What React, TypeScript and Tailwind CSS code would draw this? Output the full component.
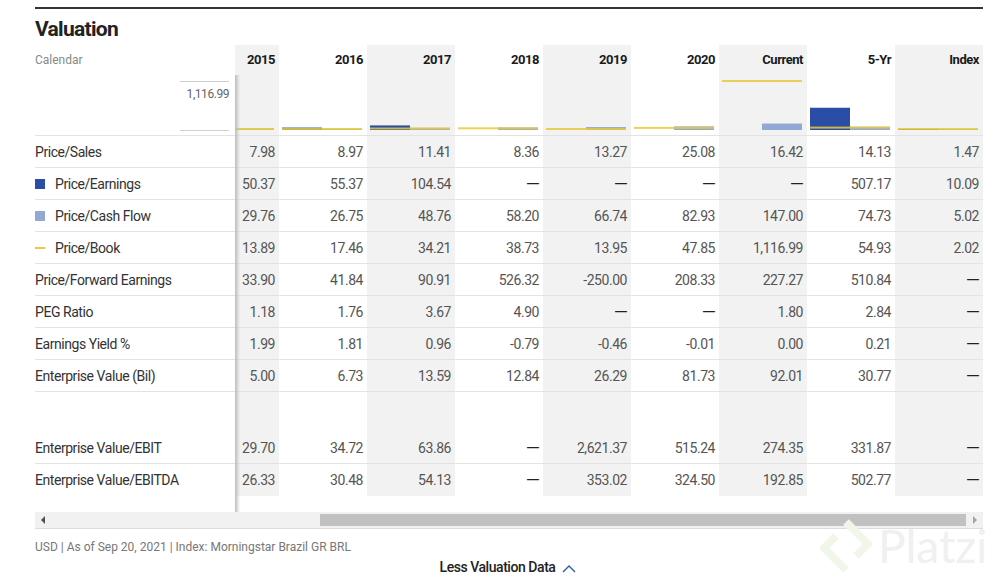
import React from 'react';

const cols = ['2015', '2016', '2017', '2018', '2019', '2020', 'Current', '5-Yr', 'Index'];

type Row = { label: string; marker?: 'pe' | 'cf' | 'pb'; values: string[] };

const rows: Row[] = [
  { label: 'Price/Sales', values: ['7.98', '8.97', '11.41', '8.36', '13.27', '25.08', '16.42', '14.13', '1.47'] },
  { label: 'Price/Earnings', marker: 'pe', values: ['50.37', '55.37', '104.54', '—', '—', '—', '—', '507.17', '10.09'] },
  { label: 'Price/Cash Flow', marker: 'cf', values: ['29.76', '26.75', '48.76', '58.20', '66.74', '82.93', '147.00', '74.73', '5.02'] },
  { label: 'Price/Book', marker: 'pb', values: ['13.89', '17.46', '34.21', '38.73', '13.95', '47.85', '1,116.99', '54.93', '2.02'] },
  { label: 'Price/Forward Earnings', values: ['33.90', '41.84', '90.91', '526.32', '-250.00', '208.33', '227.27', '510.84', '—'] },
  { label: 'PEG Ratio', values: ['1.18', '1.76', '3.67', '4.90', '—', '—', '1.80', '2.84', '—'] },
  { label: 'Earnings Yield %', values: ['1.99', '1.81', '0.96', '-0.79', '-0.46', '-0.01', '0.00', '0.21', '—'] },
  { label: 'Enterprise Value (Bil)', values: ['5.00', '6.73', '13.59', '12.84', '26.29', '81.73', '92.01', '30.77', '—'] },
];

const rowsBottom: Row[] = [
  { label: 'Enterprise Value/EBIT', values: ['29.70', '34.72', '63.86', '—', '2,621.37', '515.24', '274.35', '331.87', '—'] },
  { label: 'Enterprise Value/EBITDA', values: ['26.33', '30.48', '54.13', '—', '353.02', '324.50', '192.85', '502.77', '—'] },
];

const toNum = (s: string) => {
  const n = parseFloat(s.replace(/,/g, ''));
  return isNaN(n) ? null : n;
};

const MAX = 1116.99;
const SCALE = 49 / MAX;

const font = { fontFamily: 'Roboto, "Liberation Sans", sans-serif' };

const Marker = ({ type }: { type?: Row['marker'] }) => {
  if (type === 'pe') return <span className="inline-block w-[10px] h-[10px] bg-[#2a4ea6] mr-[10px]" />;
  if (type === 'cf') return <span className="inline-block w-[10px] h-[10px] bg-[#93a9d3] mr-[10px]" />;
  if (type === 'pb') return <span className="inline-block w-[10px] h-[2px] bg-[#e8c93a] mr-[10px]" />;
  return null;
};

const ChartCell = ({ i }: { i: number }) => {
  const pe = toNum(rows[1].values[i]);
  const cf = toNum(rows[2].values[i]);
  const pb = toNum(rows[3].values[i]);
  const h = (v: number | null) => (v === null ? 0 : Math.max(1, v * SCALE));
  const base = 55;
  return (
    <svg width="88" height="61" className="block">
      {pe !== null && <rect x="3" y={base - h(pe)} width="40" height={h(pe)} fill="#2a4ea6" />}
      {cf !== null && <rect x="43" y={base - h(cf)} width="40" height={h(cf)} fill="#93a9d3" />}
      {pb !== null && <rect x="3" y={Math.min(base - 2, base - h(pb) - 1)} width="80" height="2" fill="#e8c93a" opacity="0.85" />}
    </svg>
  );
};

const DataRow = ({ row, border = true }: { row: Row; border?: boolean }) => (
  <div className={`flex h-[32px] ${border ? 'border-b border-[#e3e3e3]' : ''}`}>
    <div className="w-[200px] shrink-0 flex items-center pt-[1px] text-[14px] text-[#333]">
      <Marker type={row.marker} />
      {row.label}
    </div>
    <div className="w-[748px] overflow-hidden">
      <div className="flex ml-[-44px] h-full">
        {row.values.map((v, i) => (
          <div
            key={i}
            className={`w-[88px] shrink-0 flex items-center justify-end pt-[1px] pr-[4px] text-[14px] ${i % 2 === 0 ? 'bg-[#f2f2f2]' : ''}`}
          >
            {v === '—' ? (
              <span className="inline-block text-[#222] scale-x-[1.3] origin-right">—</span>
            ) : (
              <span className="text-[#555]">{v}</span>
            )}
          </div>
        ))}
      </div>
    </div>
  </div>
);

export default function App() {
  return (
    <div className="relative w-[996px] h-[577px] bg-white overflow-hidden tracking-[-0.45px]" style={font}>
      <div className="pl-[35px] pt-[7px] w-[983px]">
        <div className="h-[2px] bg-[#333]" />
        <h2 className="text-[21px] font-bold text-[#222] leading-none pt-[10px] h-[36px] tracking-[-0.7px]">Valuation</h2>

        <div className="relative">
          {/* header */}
          <div className="flex h-[30px]">
            <div className="w-[200px] shrink-0 flex items-center text-[12px] text-[#888] tracking-normal">Calendar</div>
            <div className="w-[748px] overflow-hidden">
              <div className="flex ml-[-44px] h-full">
                {cols.map((c, i) => (
                  <div
                    key={c}
                    className={`w-[88px] shrink-0 flex items-center justify-end pr-[4px] text-[13px] font-bold text-[#1a1a1a] ${i % 2 === 0 ? 'bg-[#f2f2f2]' : ''}`}
                  >
                    {c}
                  </div>
                ))}
              </div>
            </div>
          </div>

          {/* chart */}
          <div className="flex h-[61px] border-b border-[#e3e3e3]">
            <div className="w-[200px] shrink-0 flex justify-end pr-[6px]">
              <div className="w-[49px] mt-[6px] h-[50px] border-t border-b border-[#cfcfcf] flex flex-col items-end">
                <span className="text-[12px] text-[#666] mt-[3px]">1,116.99</span>
              </div>
            </div>
            <div className="w-[748px] overflow-hidden">
              <div className="flex ml-[-44px] h-full">
                {cols.map((c, i) => (
                  <div key={c} className={`w-[88px] shrink-0 ${i % 2 === 0 ? 'bg-[#f2f2f2]' : ''}`}>
                    <ChartCell i={i} />
                  </div>
                ))}
              </div>
            </div>
          </div>

          {rows.map((r) => (
            <DataRow key={r.label} row={r} />
          ))}

          {/* spacer row */}
          <div className="flex h-[40px]">
            <div className="w-[200px] shrink-0" />
            <div className="w-[748px] overflow-hidden">
              <div className="flex ml-[-44px] h-full">
                {cols.map((c, i) => (
                  <div key={c} className={`w-[88px] shrink-0 ${i % 2 === 0 ? 'bg-[#f2f2f2]' : ''}`} />
                ))}
              </div>
            </div>
          </div>

          <DataRow row={rowsBottom[0]} />
          <DataRow row={rowsBottom[1]} border={false} />
          <div className="h-[16px]" />

          {/* sticky column shadow */}
          <div className="absolute left-[200px] top-[30px] bottom-0 w-[5px] bg-gradient-to-r from-[#bdbdbd] to-transparent" />
        </div>

        {/* scrollbar */}
        <div className="relative h-[17px] bg-[#f1f1f1] border-b border-[#dcdcdc]">
          <div className="absolute left-[6px] top-[4px] w-0 h-0 border-y-[4px] border-y-transparent border-r-[4px] border-r-[#505050]" />
          <div className="absolute left-[285px] right-[17px] top-[2px] h-[12px] bg-[#c1c1c1]" />
          <div className="absolute right-[6px] top-[4px] w-0 h-0 border-y-[4px] border-y-transparent border-l-[4px] border-l-[#a3a3a3]" />
        </div>

        <div className="mt-[10px] text-[12px] leading-[16px] text-[#777] tracking-normal">USD | As of Sep 20, 2021 | Index: Morningstar Brazil GR BRL</div>

        <div className="mt-[2px] flex justify-center items-center gap-[7px] pr-[2px] h-[20px]">
          <span className="text-[14px] leading-[18px] font-medium text-[#222]">Less Valuation Data</span>
          <svg width="14" height="9" viewBox="0 0 14 9" className="mt-[3px]">
            <path d="M1 8 L7 2 L13 8" fill="none" stroke="#2a5ba8" strokeWidth="1.4" />
          </svg>
        </div>
      </div>

      {/* watermark */}
      <div className="absolute left-[820px] top-[518px] flex items-center gap-[6px] pointer-events-none">
        <svg width="52" height="56" viewBox="0 0 52 56">
          <path d="M26 4 L48 26 L36 38 M26 52 L4 30 L16 18" fill="none" stroke="#f1f6ea" strokeWidth="8" strokeLinejoin="round" />
        </svg>
        <span className="text-[46px] text-[#f0f0f0] leading-none tracking-normal" style={{ fontFamily: 'Lato, sans-serif' }}>Platzi</span>
      </div>
    </div>
  );
}
